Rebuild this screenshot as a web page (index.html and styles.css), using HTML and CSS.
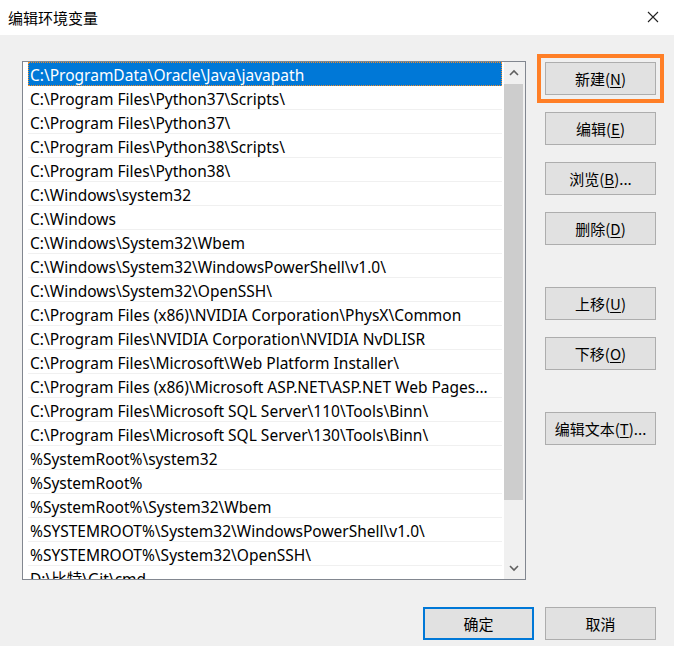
FILE: index.html
```html
<!DOCTYPE html>
<html lang="zh-CN">
<head>
<meta charset="utf-8">
<title>编辑环境变量</title>
<link rel="stylesheet" href="styles.css">
</head>
<body>
<div class="window">
  <div class="titlebar">
    <span class="title">编辑环境变量</span>
    <svg class="close" width="12" height="12" viewBox="0 0 12 12"><path d="M1 1 L11 11 M11 1 L1 11" stroke="#222" stroke-width="1.1" fill="none"/></svg>
  </div>
  <div class="main">
    <div class="listbox">
      <div class="items">
        <div class="row selected">C:\ProgramData\Oracle\Java\javapath</div>
        <div class="row">C:\Program Files\Python37\Scripts\</div>
        <div class="row">C:\Program Files\Python37\</div>
        <div class="row">C:\Program Files\Python38\Scripts\</div>
        <div class="row">C:\Program Files\Python38\</div>
        <div class="row">C:\Windows\system32</div>
        <div class="row">C:\Windows</div>
        <div class="row">C:\Windows\System32\Wbem</div>
        <div class="row">C:\Windows\System32\WindowsPowerShell\v1.0\</div>
        <div class="row">C:\Windows\System32\OpenSSH\</div>
        <div class="row">C:\Program Files (x86)\NVIDIA Corporation\PhysX\Common</div>
        <div class="row">C:\Program Files\NVIDIA Corporation\NVIDIA NvDLISR</div>
        <div class="row">C:\Program Files\Microsoft\Web Platform Installer\</div>
        <div class="row">C:\Program Files (x86)\Microsoft ASP.NET\ASP.NET Web Pages...</div>
        <div class="row">C:\Program Files\Microsoft SQL Server\110\Tools\Binn\</div>
        <div class="row">C:\Program Files\Microsoft SQL Server\130\Tools\Binn\</div>
        <div class="row">%SystemRoot%\system32</div>
        <div class="row">%SystemRoot%</div>
        <div class="row">%SystemRoot%\System32\Wbem</div>
        <div class="row">%SYSTEMROOT%\System32\WindowsPowerShell\v1.0\</div>
        <div class="row">%SYSTEMROOT%\System32\OpenSSH\</div>
        <div class="row">D:\比特\Git\cmd</div>
      </div>
      <div class="scrollbar">
        <div class="arrow up"><svg width="10" height="7" viewBox="0 0 10 7"><path d="M1 6 L5 2 L9 6" stroke="#606060" stroke-width="1.6" fill="none"/></svg></div>
        <div class="thumb"></div>
        <div class="track"></div>
        <div class="arrow down"><svg width="10" height="7" viewBox="0 0 10 7"><path d="M1 1 L5 5 L9 1" stroke="#606060" stroke-width="1.6" fill="none"/></svg></div>
      </div>
    </div>
    <div class="actions">
      <button class="btn highlighted">新建(<u>N</u>)</button>
      <button class="btn">编辑(<u>E</u>)</button>
      <button class="btn">浏览(<u>B</u>)...</button>
      <button class="btn">删除(<u>D</u>)</button>
      <button class="btn group">上移(<u>U</u>)</button>
      <button class="btn">下移(<u>O</u>)</button>
      <button class="btn group">编辑文本(<u>T</u>)...</button>
    </div>
  </div>
  <div class="footer">
    <button class="btn default">确定</button>
    <button class="btn">取消</button>
  </div>
</div>
</body>
</html>
```

FILE: styles.css
```css
html, body {
  margin: 0;
  padding: 0;
}
body {
  background: #f0f0f0;
  font-family: "Noto Sans", "Noto Sans CJK SC", sans-serif;
  font-size: 15px;
  color: #000;
}
.window {
  width: 674px;
  height: 646px;
  overflow: hidden;
  background: #f0f0f0;
}
.titlebar {
  height: 35px;
  background: #fff;
  display: flex;
  align-items: center;
  justify-content: space-between;
  padding: 0 15px 0 8px;
}
.title {
  font-family: "Noto Sans CJK SC", sans-serif;
  font-size: 15px;
  color: #000;
  margin-top: -1px;
}
.close {
  display: block;
  margin-top: -1px;
}
.main {
  display: flex;
  padding: 26px 0 0 22px;
}
.listbox {
  width: 504px;
  height: 519px;
  box-sizing: border-box;
  border: 1px solid #828790;
  background: #fff;
  display: flex;
}
.items {
  flex: 1;
  padding: 0 2px 0 5px;
  overflow: hidden;
}
.row {
  height: 23px;
  line-height: 26px;
  font-size: 15.5px;
  border-bottom: 1px solid #f0f0f0;
  padding-left: 2px;
  white-space: nowrap;
  overflow: hidden;
}
.row.selected {
  background: #0078d7;
  color: #fff;
  outline: 1px dotted #f28c28;
  outline-offset: -1px;
  border-bottom-color: #0078d7;
}
.scrollbar {
  width: 21px;
  background: #f0f0f0;
  display: flex;
  flex-direction: column;
}
.arrow {
  display: flex;
  align-items: center;
  justify-content: center;
  padding-right: 2px;
}
.arrow.up {
  height: 21px;
}
.arrow.down {
  height: 21px;
}
.thumb {
  height: 416px;
  background: #cdcdcd;
  margin: 1px 2px 0 0;
}
.track {
  flex: 1;
}
.actions {
  display: flex;
  flex-direction: column;
  gap: 17px;
  margin-left: 19px;
  padding-top: 1px;
}
.btn {
  width: 111px;
  height: 33px;
  box-sizing: border-box;
  border: 1px solid #adadad;
  background: #e1e1e1;
  font-family: "Noto Sans CJK SC", sans-serif;
  font-size: 15px;
  color: #000;
  padding: 0;
  margin: 0;
  line-height: 1;
}
.btn u {
  text-decoration-thickness: 1px;
  text-underline-offset: 2px;
}
.btn.group {
  margin-top: 25px;
}
.btn.highlighted {
  outline: 4px solid #ff7f27;
  outline-offset: 4px;
}
.btn.default {
  border: 2px solid #0078d7;
}
.footer {
  display: flex;
  justify-content: flex-end;
  gap: 11px;
  padding: 27px 18px 0 0;
}
```
